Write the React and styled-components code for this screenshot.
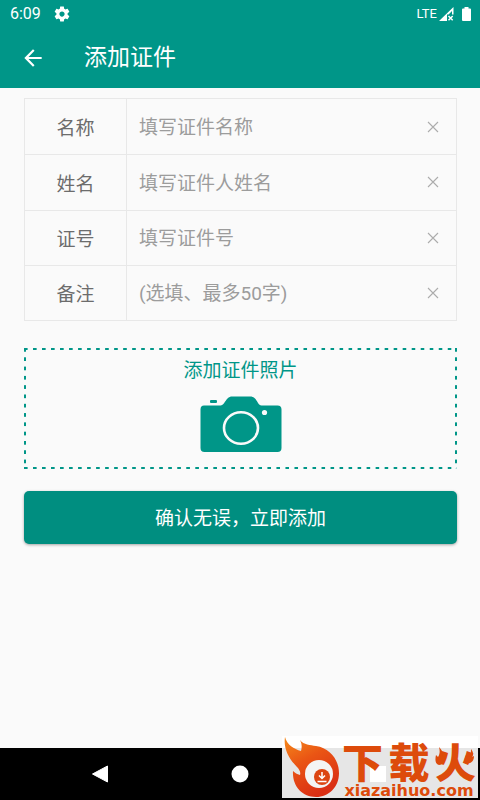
import React, { useState } from "react";
import styled, { createGlobalStyle } from "styled-components";

const TEAL = "#009688";

const GlobalStyle = createGlobalStyle`
  *, *::before, *::after { box-sizing: border-box; }
  body {
    margin: 0;
    background: #fafafa;
    font-family: Roboto, "Noto Sans CJK SC", sans-serif;
  }
  button, input { font-family: inherit; }
`;

const Screen = styled.div`
  position: relative;
  display: flex;
  flex-direction: column;
  min-height: 100vh;
`;

const Header = styled.header`
  background: ${TEAL};
  color: #fff;
`;

const StatusBar = styled.div`
  display: flex;
  align-items: center;
  height: 28px;
  padding: 0 9px 0 10px;
`;

const Clock = styled.span`
  font-size: 16px;
  line-height: 28px;
  margin-right: 12px;
`;

const Network = styled.span`
  margin-left: auto;
  margin-right: 2px;
  font-size: 13px;
  line-height: 26px;
`;

const BatteryIcon = styled.svg`
  margin-left: 8px;
`;

const AppBar = styled.div`
  display: flex;
  align-items: center;
  height: 60px;
  padding: 0 20px;
`;

const BackButton = styled.button`
  display: flex;
  padding: 0;
  border: 0;
  background: none;
  color: inherit;
  margin-right: 38px;
`;

const Title = styled.h1`
  margin: 0;
  font-size: 23px;
  line-height: 32px;
  font-weight: 400;
`;

const Form = styled.form`
  flex: 1;
  display: flex;
  flex-direction: column;
  padding: 10px 23px 24px 24px;
`;

const Fields = styled.div`
  display: grid;
  grid-auto-rows: 1fr;
  min-height: 223px;
  border: 1px solid #e8e8e8;
`;

const Field = styled.div`
  display: flex;
  align-items: stretch;

  & + & { border-top: 1px solid #e8e8e8; }
`;

const Label = styled.label`
  display: flex;
  align-items: center;
  justify-content: center;
  width: 102px;
  border-right: 1px solid #e8e8e8;
  color: #6c6c6c;
  font-size: 19px;
`;

const TextInput = styled.input`
  flex: 1;
  min-width: 0;
  padding: 2px 12px 0;
  border: 0;
  outline: 0;
  background: none;
  color: #444;
  font-size: 19px;

  &::placeholder { color: #9c9c9c; opacity: 1; }
`;

const ClearButton = styled.button`
  display: flex;
  align-items: center;
  justify-content: center;
  width: 46px;
  padding: 0;
  border: 0;
  background: none;
  color: #acacac;
`;

const PhotoButton = styled.button`
  display: flex;
  flex-direction: column;
  align-items: center;
  gap: 11px;
  min-height: 121px;
  margin-top: 27px;
  padding: 8px 0 16px;
  border: 0;
  color: ${TEAL};
  font-size: 19px;
  line-height: 29px;
  background-color: transparent;
  background-image:
    linear-gradient(90deg, ${TEAL} 4px, transparent 4px),
    linear-gradient(90deg, ${TEAL} 4px, transparent 4px),
    linear-gradient(${TEAL} 4px, transparent 4px),
    linear-gradient(${TEAL} 4px, transparent 4px);
  background-size: 9px 2px, 9px 2px, 2px 9px, 2px 9px;
  background-position: left top, left bottom, left top, right top;
  background-repeat: round no-repeat, round no-repeat, no-repeat round, no-repeat round;
`;

const SubmitButton = styled.button`
  height: 53px;
  margin-top: 22px;
  padding: 0 0 2px;
  border: 0;
  border-radius: 5px;
  background: #008e80;
  color: #fff;
  font-size: 19px;
  box-shadow: 0 1px 3px rgba(0, 0, 0, 0.35);
`;

const NavBar = styled.nav`
  display: grid;
  grid-template-columns: repeat(3, 140px);
  justify-content: center;
  height: 52px;
  background: #000;
`;

const NavButton = styled.button`
  display: flex;
  align-items: center;
  justify-content: center;
  padding: 0;
  border: 0;
  background: none;
`;

const Watermark = styled.aside`
  position: absolute;
  right: 2px;
  bottom: 2px;
  display: flex;
  width: 196px;
  height: 62px;
  background: linear-gradient(#fff 12px, #e6e6e6 12px);
  color: #dd4b0b;
`;

const WatermarkPatch = styled.span`
  position: absolute;
  left: 88px;
  top: 30px;
  width: 16px;
  height: 16px;
  background: #fff;
`;

const WatermarkText = styled.div`
  position: relative;
  display: flex;
  flex-direction: column;
  justify-content: space-between;
  align-items: center;
  width: 138px;
  padding: 6px 0 1px;
`;

const WatermarkName = styled.span`
  display: flex;
  justify-content: space-between;
  width: 134px;
  font-family: "Noto Sans CJK SC", sans-serif;
  font-size: 41px;
  line-height: 36px;
  font-weight: 900;
  white-space: nowrap;
`;

const WatermarkSite = styled.span`
  font-family: "DejaVu Sans", sans-serif;
  font-size: 16px;
  line-height: 13px;
  font-weight: 700;
`;

const WatermarkSparks = styled.svg`
  position: absolute;
  right: 3px;
  top: 10px;
`;

const FIELDS = [
  { id: "name", label: "名称", hint: "填写证件名称" },
  { id: "holder", label: "姓名", hint: "填写证件人姓名" },
  { id: "number", label: "证号", hint: "填写证件号" },
  { id: "note", label: "备注", hint: "(选填、最多50字)" },
];

function FormField({ id, label, hint }) {
  const [value, setValue] = useState("");
  return (
    <Field>
      <Label htmlFor={id}>{label}</Label>
      <TextInput
        id={id}
        placeholder={hint}
        value={value}
        onChange={(e) => setValue(e.target.value)}
      />
      <ClearButton type="button" aria-label={`清除${label}`} onClick={() => setValue("")}>
        <svg width="12" height="12" viewBox="0 0 12 12" stroke="currentColor" strokeWidth="1.100">
          <path d="M1 1l10 10M11 1L1 11" />
        </svg>
      </ClearButton>
    </Field>
  );
}

function GearIcon() {
  return (
    <svg width="18" height="18" viewBox="0 0 24 24" fill="#fff">
      <path d="M19.43 12.98c.04-.32.07-.64.07-.98s-.03-.66-.07-.98l2.11-1.65c.19-.15.24-.42.12-.64l-2-3.46c-.12-.22-.39-.3-.61-.22l-2.49 1c-.52-.4-1.08-.73-1.69-.98l-.38-2.65C14.46 2.18 14.25 2 14 2h-4c-.25 0-.46.18-.49.42l-.38 2.65c-.61.25-1.17.59-1.69.98l-2.49-1c-.23-.09-.49 0-.61.22l-2 3.46c-.13.22-.07.49.12.64l2.11 1.65c-.04.32-.07.65-.07.98s.03.66.07.98l-2.11 1.65c-.19.15-.24.42-.12.64l2 3.46c.12.22.39.3.61.22l2.49-1c.52.4 1.08.73 1.69.98l.38 2.65c.03.24.24.42.49.42h4c.25 0 .46-.18.49-.42l.38-2.65c.61-.25 1.17-.59 1.69-.98l2.49 1c.23.09.49 0 .61-.22l2-3.46c.12-.22.07-.49-.12-.64l-2.11-1.65zM12 15.5c-1.93 0-3.5-1.57-3.5-3.5s1.57-3.5 3.5-3.5 3.5 1.57 3.5 3.5-1.57 3.5-3.5 3.5z" />
    </svg>
  );
}

function SignalIcon() {
  return (
    <svg width="15" height="14" viewBox="0 0 15 14">
      <path
        fillRule="evenodd"
        d="M0 14L14.500 0V7.500H8V14ZM9.500 7.500H13V4Z"
        fill="#fff"
      />
      <path d="M9.500 9l4.200 4.200M13.700 9L9.500 13.200" stroke="#fff" strokeWidth="1.500" />
    </svg>
  );
}

function CameraIcon() {
  return (
    <svg width="82" height="57" viewBox="0 0 82 57">
      <rect x="10" y="4" width="7" height="3" rx="1" fill={TEAL} />
      <path
        d="M4 9.500H20.500C23.500 9.500 25 5 27.500 2.500C29 1 30.500 .5 32 .5H50C52 .5 53.500 1 55 2.500C57.500 5 58.500 9.500 61.500 9.500H77.500Q81.500 9.500 81.500 13.500V52Q81.500 56 77.500 56H4.500Q.5 56 .5 52V13.500Q.5 9.500 4 9.500Z"
        fill={TEAL}
      />
      <ellipse cx="41" cy="32" rx="17" ry="15.700" fill="none" stroke="#fafafa" strokeWidth="2.600" />
      <circle cx="64.500" cy="16.500" r="2.600" fill="#fafafa" />
    </svg>
  );
}

function FlameLogo() {
  return (
    <svg width="58" height="62" viewBox="0 0 58 62">
      <defs>
        <linearGradient id="flame" x1="0" y1="0" x2="0.500" y2="1">
          <stop offset="0" stopColor="#f58a1b" />
          <stop offset="0.450" stopColor="#ea5514" />
          <stop offset="1" stopColor="#da2f14" />
        </linearGradient>
      </defs>
      <path
        d="M3 1C5 9 12 13 19 15C20 11 20 8 18 4C22 9 28 9 34 10C48 12 57 24 57 37C57 51 47 61 34 61C20 61 10 50 11 35C13 37 15 38 18 39C19 36 17 33 15 31C8 24 1 13 3 1Z"
        fill="url(#flame)"
      />
      <circle cx="37" cy="38" r="14" fill="#f4f4f4" />
      <circle cx="40" cy="41" r="8" fill="#dc4512" />
      <path d="M40 36V42M37 39.500L40 42.500L43 39.500M35.500 45.500H44.500" fill="none" stroke="#fff" strokeWidth="1.500" />
    </svg>
  );
}

export default function App() {
  return (
    <Screen>
      <GlobalStyle />
      <Header>
        <StatusBar>
          <Clock>6:09</Clock>
          <GearIcon />
          <Network>LTE</Network>
          <SignalIcon />
          <BatteryIcon width="9" height="14" viewBox="0 0 9 14">
            <path d="M2.500 0h4v1.500H8q1 0 1 1V13q0 1-1 1H1q-1 0-1-1V2.500q0-1 1-1h1.500Z" fill="#fff" />
          </BatteryIcon>
        </StatusBar>
        <AppBar>
          <BackButton type="button" aria-label="返回">
            <svg width="26" height="26" viewBox="0 0 24 24" fill="currentColor">
              <path d="M20 11H7.830l5.590-5.590L12 4l-8 8 8 8 1.410-1.410L7.830 13H20v-2z" />
            </svg>
          </BackButton>
          <Title>添加证件</Title>
        </AppBar>
      </Header>
      <Form onSubmit={(e) => e.preventDefault()}>
        <Fields>
          {FIELDS.map((f) => (
            <FormField key={f.id} {...f} />
          ))}
        </Fields>
        <PhotoButton type="button">
          添加证件照片
          <CameraIcon />
        </PhotoButton>
        <SubmitButton type="submit">确认无误，立即添加</SubmitButton>
      </Form>
      <NavBar>
        <NavButton type="button" aria-label="后退">
          <svg width="18" height="18" viewBox="0 0 18 18">
            <path d="M1.500 9L16.500 1V17Z" fill="#fff" stroke="#fff" strokeLinejoin="round" />
          </svg>
        </NavButton>
        <NavButton type="button" aria-label="主屏幕">
          <svg width="18" height="18" viewBox="0 0 18 18">
            <circle cx="9" cy="9" r="8.500" fill="#fff" />
          </svg>
        </NavButton>
        <NavButton type="button" aria-label="最近任务">
          <svg width="16" height="16" viewBox="0 0 16 16">
            <rect width="16" height="16" rx="1" fill="#fff" />
          </svg>
        </NavButton>
      </NavBar>
      <Watermark>
        <WatermarkPatch />
        <FlameLogo />
        <WatermarkText>
          <WatermarkName>
            <span>下</span>
            <span>载</span>
            <span>火</span>
          </WatermarkName>
          <WatermarkSite>xiazaihuo.com</WatermarkSite>
        </WatermarkText>
        <WatermarkSparks width="40" height="20" viewBox="0 0 40 20" fill="currentColor">
          <path d="M4 1C8 5 9 9 7 12L9 10C10 15 8 19 4 19C0 18 0 13 1 9L3 11C5 8 5 5 4 1Z" />
          <path d="M36 3C38 6 39 8 37 11L39 10C39 15 36 18 32 17C29 16 29 12 31 9L33 11C36 9 36 6 36 3Z" />
        </WatermarkSparks>
      </Watermark>
    </Screen>
  );
}
